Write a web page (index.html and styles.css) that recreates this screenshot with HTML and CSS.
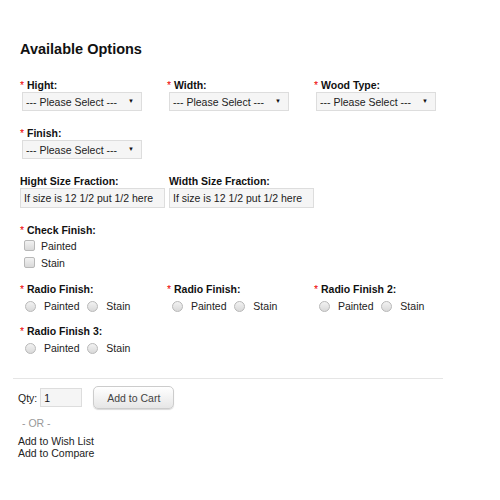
FILE: index.html
```html
<!DOCTYPE html>
<html>
    <head>
        <title>Product Options</title>
        <meta charset="UTF-8">
        <meta name="viewport" content="width=device-width, initial-scale=1.0">
        <link rel="stylesheet" href="styles.css">
    </head>
    <body>
        <div class="options">
            <h2 class="options-title">Available Options</h2>
            <div class="option-row">
                <div class="option">
                    <label class="option-label"><span class="required">*</span> Hight:</label>
                    <span class="select-wrap">
                        <select class="option-select"><option>--- Please Select ---</option></select>
                        <span class="select-arrow">&#9660;</span>
                    </span>
                </div>
                <div class="option">
                    <label class="option-label"><span class="required">*</span> Width:</label>
                    <span class="select-wrap">
                        <select class="option-select"><option>--- Please Select ---</option></select>
                        <span class="select-arrow">&#9660;</span>
                    </span>
                </div>
                <div class="option">
                    <label class="option-label"><span class="required">*</span> Wood Type:</label>
                    <span class="select-wrap">
                        <select class="option-select"><option>--- Please Select ---</option></select>
                        <span class="select-arrow">&#9660;</span>
                    </span>
                </div>
            </div>
            <div class="option-row">
                <div class="option">
                    <label class="option-label"><span class="required">*</span> Finish:</label>
                    <span class="select-wrap">
                        <select class="option-select"><option>--- Please Select ---</option></select>
                        <span class="select-arrow">&#9660;</span>
                    </span>
                </div>
            </div>
            <!-- text fields for fractions -->
            <div class="option-row fraction-row">
                <div class="fraction">
                    <label class="option-label">Hight Size Fraction:</label>
                    <input type="text" class="fraction-input" value="If size is 12 1/2 put 1/2 here">
                </div>
                <div class="fraction">
                    <label class="option-label">Width Size Fraction:</label>
                    <input type="text" class="fraction-input" value="If size is 12 1/2 put 1/2 here">
                </div>
            </div>
            <div class="option-row check-row">
                <div class="option">
                    <label class="option-label"><span class="required">*</span> Check Finish:</label>
                    <label class="check-line"><input type="checkbox" class="check"> Painted</label>
                    <label class="check-line"><input type="checkbox" class="check"> Stain</label>
                </div>
            </div>
            <div class="option-row radio-row">
                <div class="option">
                    <label class="option-label"><span class="required">*</span> Radio Finish:</label>
                    <div class="radio-line">
                        <label><input type="radio" name="r1" class="radio"> Painted</label>
                        <label><input type="radio" name="r1" class="radio"> Stain</label>
                    </div>
                </div>
                <div class="option">
                    <label class="option-label"><span class="required">*</span> Radio Finish:</label>
                    <div class="radio-line">
                        <label><input type="radio" name="r2" class="radio"> Painted</label>
                        <label><input type="radio" name="r2" class="radio"> Stain</label>
                    </div>
                </div>
                <div class="option">
                    <label class="option-label"><span class="required">*</span> Radio Finish 2:</label>
                    <div class="radio-line">
                        <label><input type="radio" name="r3" class="radio"> Painted</label>
                        <label><input type="radio" name="r3" class="radio"> Stain</label>
                    </div>
                </div>
            </div>
            <div class="option-row">
                <div class="option">
                    <label class="option-label"><span class="required">*</span> Radio Finish 3:</label>
                    <div class="radio-line">
                        <label><input type="radio" name="r4" class="radio"> Painted</label>
                        <label><input type="radio" name="r4" class="radio"> Stain</label>
                    </div>
                </div>
            </div>
        </div>
        <div class="cart">
            <div class="cart-line">
                Qty: <input type="text" class="qty" value="1">
                <button class="cart-button">Add to Cart</button>
            </div>
            <div class="or-line">- OR -</div>
            <div class="cart-links">
                <a href="#" class="cart-link">Add to Wish List</a><br>
                <a href="#" class="cart-link">Add to Compare</a>
            </div>
        </div>
    </body>
</html>
```

FILE: styles.css
```css
body {
    margin: 0;
    padding: 0;
    background-color: #fff;
    font-family: "Liberation Sans", Arial, sans-serif;
    font-size: 10.5px;
    color: #222;
}
.options {
    padding: 40px 0 0 20px;
}
.options-title {
    margin: 0 0 21px 0;
    font-size: 14.5px;
    line-height: 18px;
    font-weight: bold;
    color: #111;
}
.option-row {
    display: flex;
    margin-bottom: 16px;
}
.check-row {
    margin-bottom: 12px;
}
.radio-row {
    margin-bottom: 12px;
}
.option {
    width: 147px;
}
.option-label {
    display: block;
    font-weight: bold;
    line-height: 13px;
    color: #111;
}
.required {
    color: #e00;
    font-weight: normal;
}
.select-wrap {
    position: relative;
    display: inline-block;
    margin-left: 2px;
}
.option-select {
    appearance: none;
    -webkit-appearance: none;
    width: 120px;
    height: 19px;
    padding: 0 0 0 3px;
    border: 1px solid #ddd;
    background-color: #f5f5f5;
    font-family: "Liberation Sans", Arial, sans-serif;
    font-size: 10.5px;
    color: #222;
    outline: none;
}
.select-arrow {
    position: absolute;
    right: 8px;
    top: 6px;
    font-size: 6px;
    color: #111;
    pointer-events: none;
}
.fraction-row {
    gap: 4px;
}
.fraction-input {
    box-sizing: border-box;
    width: 145px;
    height: 20px;
    padding: 0 3px;
    border: 1px solid #ddd;
    background-color: #f5f5f5;
    font-family: "Liberation Sans", Arial, sans-serif;
    font-size: 10.5px;
    color: #222;
    outline: none;
}
.check-line {
    display: flex;
    align-items: center;
    height: 17px;
    padding-left: 4px;
    gap: 6px;
}
.check,
.radio {
    appearance: none;
    -webkit-appearance: none;
    width: 11px;
    height: 11px;
    margin: 0;
    border: 1px solid #b8b8b8;
    background: linear-gradient(#f2f2f2, #d9d9d9);
}
.check {
    border-radius: 2px;
}
.radio {
    border-radius: 50%;
    margin: 0 5px 0 0;
    vertical-align: -2px;
}
.radio-line {
    padding: 3px 0 0 5px;
    line-height: 14px;
}
.radio-line label {
    margin-right: 5px;
}
.cart {
    margin: 23px 0 0 13px;
    width: 430px;
    border-top: 1px solid #e5e5e5;
    padding-top: 7px;
}
.cart-line {
    display: flex;
    align-items: center;
    padding-left: 5px;
}
.qty {
    box-sizing: border-box;
    width: 42px;
    height: 19px;
    margin: 0 11px 0 3px;
    padding: 0 3px;
    border: 1px solid #ddd;
    background-color: #f5f5f5;
    font-family: "Liberation Sans", Arial, sans-serif;
    font-size: 10.5px;
    color: #111;
}
.cart-button {
    width: 81px;
    height: 23px;
    border: 1px solid #ccc;
    border-radius: 5px;
    background: linear-gradient(#fff, #e6e6e6);
    box-shadow: 0 1px 1px rgba(0, 0, 0, 0.15);
    font-family: "Liberation Sans", Arial, sans-serif;
    font-size: 10.5px;
    color: #444;
}
.or-line {
    padding: 7px 0 0 9px;
    color: #999;
    line-height: 14px;
}
.cart-links {
    padding: 5px 0 0 5px;
    line-height: 12px;
}
.cart-link {
    color: #222;
    text-decoration: none;
}
```
